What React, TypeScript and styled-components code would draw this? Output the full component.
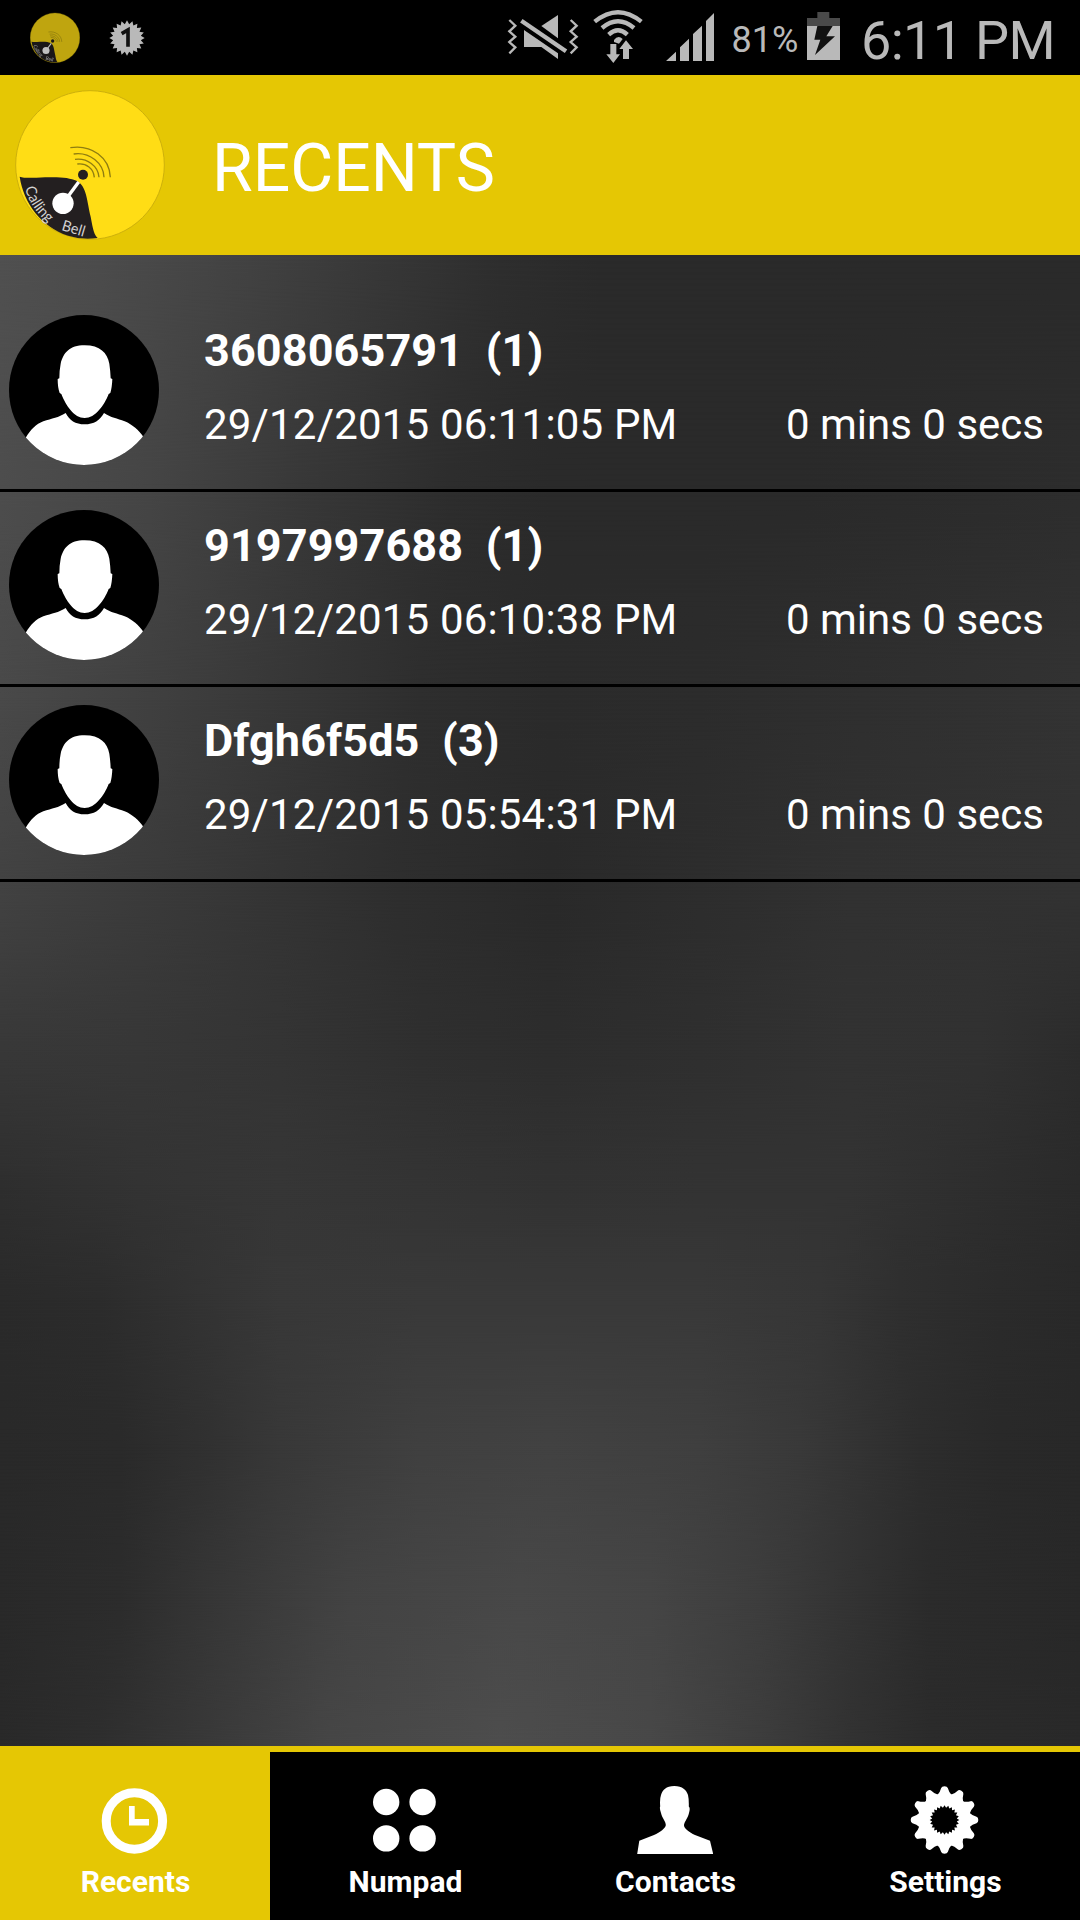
import React from "react";
import styled, { createGlobalStyle } from "styled-components";

const YELLOW = "#e5c704";
const GREY = "#b9b9b9";

const GlobalStyle = createGlobalStyle`
  * { box-sizing: border-box; }
  body { margin: 0; background: #000; }
  svg { display: block; flex: none; }
`;

const Screen = styled.div`
  width: 1080px;
  height: 1920px;
  display: flex;
  flex-direction: column;
  overflow: hidden;
  font-family: Roboto, "Noto Sans", sans-serif;
  color: #fff;
`;

const StatusBar = styled.div`
  height: 75px;
  flex: none;
  display: flex;
  justify-content: space-between;
  background: #000;
  color: ${GREY};
`;

const Notifications = styled.div`
  display: flex;
  padding-left: 29px;
  gap: 28px;
`;

const Indicators = styled.div`
  display: flex;
  align-items: flex-start;
  padding-right: 19px;
`;

const Glyph = styled.svg<{ $w: number; $gap?: number }>`
  width: ${(p) => p.$w}px;
  height: 75px;
  margin-right: ${(p) => p.$gap ?? 0}px;
`;

const BatteryLevel = styled.span`
  width: 74.5px;
  padding-top: 19px;
  font-size: 36px;
  line-height: 42px;
`;

const Clock = styled.span`
  width: 200px;
  padding-top: 9px;
  font-size: 54px;
  line-height: 64px;
  letter-spacing: -0.7px;
  white-space: nowrap;
`;

const Header = styled.header`
  height: 180px;
  flex: none;
  display: flex;
  align-items: center;
  padding-left: 14px;
  gap: 46px;
  background: ${YELLOW};
`;

const Title = styled.h1`
  margin: 0;
  padding-top: 7px;
  font-size: 66px;
  line-height: 78px;
  font-weight: 400;
`;

const Body = styled.main`
  flex: 1;
  display: grid;
  grid-template: 100% / 100%;
`;

const Band = styled.div<{ $stops: string; $from: number; $to: number }>`
  grid-area: 1 / 1;
  background: linear-gradient(90deg, ${(p) => p.$stops});
  ${(p) =>
    p.$to > 0 &&
    `mask-image: linear-gradient(180deg, transparent ${p.$from}px, #000 ${p.$to}px);`}
`;

const CallList = styled.div`
  grid-area: 1 / 1;
  z-index: 1;
  padding-top: 42px;
`;

const Row = styled.article`
  height: 195px;
  display: flex;
  padding: 18px 36px 0 9px;
  gap: 45px;
  border-bottom: 3px solid #000;
`;

const CallInfo = styled.div`
  flex: 1;
  padding-top: 9px;
  display: flex;
  flex-direction: column;
  gap: 23px;
`;

const Caller = styled.div`
  font-size: 45px;
  line-height: 53px;
  font-weight: 700;
  letter-spacing: 0.1px;
  white-space: pre;
`;

const CallMeta = styled.div`
  display: flex;
  justify-content: space-between;
  font-size: 42px;
  line-height: 50px;
`;

const CallDate = styled.span`
  letter-spacing: 0.18px;
`;

const TabBar = styled.nav`
  height: 174px;
  flex: none;
  display: grid;
  grid-template-columns: repeat(4, 1fr);
  border-top: 6px solid ${YELLOW};
  background: #000;
`;

const Tab = styled.div<{ $active?: boolean }>`
  display: flex;
  flex-direction: column;
  align-items: center;
  gap: 10px;
  padding-top: 34px;
  background: ${(p) => (p.$active ? YELLOW : "#000")};
`;

const TabLabel = styled.span`
  margin-left: 1px;
  font-size: 30px;
  line-height: 36px;
  font-weight: 700;
`;

const TabIcon = styled.svg`
  width: 76px;
  height: 68px;
`;

/* Wallpaper shades: one entry per height, each a list of [x, grey level]. */
const shades: { y: number; points: [number, number][] }[] = [
  { y: 0, points: [[0, 80], [100, 76], [250, 66], [400, 54], [500, 46], [600, 42], [1080, 42]] },
  { y: 235, points: [[0, 77], [150, 69], [300, 56], [450, 45], [550, 42], [800, 42], [1080, 45]] },
  { y: 445, points: [[0, 73], [150, 64], [300, 54], [420, 46], [550, 43], [700, 44], [1080, 51]] },
  { y: 635, points: [[0, 66], [140, 59], [300, 51], [400, 46], [550, 41], [700, 45], [850, 49], [1080, 50]] },
  { y: 795, points: [[0, 56], [140, 55], [280, 52], [420, 47], [550, 45], [700, 47], [850, 50], [980, 49], [1080, 44]] },
  { y: 935, points: [[0, 46], [140, 51], [280, 54], [420, 52], [550, 50], [700, 51], [850, 51], [1000, 45], [1080, 42]] },
  { y: 1045, points: [[0, 42], [100, 44], [200, 51], [280, 56], [420, 57], [700, 57], [820, 54], [900, 47], [1000, 43], [1080, 41]] },
  { y: 1195, points: [[0, 41], [120, 42], [210, 49], [280, 56], [420, 64], [550, 66], [700, 63], [800, 57], [920, 45], [1000, 41], [1080, 40]] },
  { y: 1345, points: [[0, 41], [120, 44], [210, 54], [350, 67], [520, 72], [650, 69], [760, 61], [850, 51], [930, 43], [1080, 40]] },
  { y: 1491, points: [[0, 41], [100, 46], [200, 56], [330, 70], [500, 77], [650, 72], [760, 61], [850, 50], [930, 43], [1080, 41]] },
];

const star = (n: number, cx: number, cy: number, R: number, r: number) =>
  Array.from({ length: n * 2 }, (_, i) => {
    const a = (i * Math.PI) / n - Math.PI / 2;
    const d = i % 2 ? r : R;
    return `${(cx + d * Math.cos(a)).toFixed(2)},${(cy + d * Math.sin(a)).toFixed(2)}`;
  }).join(" ");

const LogoArt = ({ id }: { id: string }) => (
  <>
    <circle cx="271" cy="285" r="223" fill="#ffdd15" stroke="#cdb00c" strokeWidth="3" />
    <path d="M60 320 Q75 325 110 323 C180 320 205 322 232 333 C262 350 262 395 273 440 C280 480 284 495 294 504 Q245 510 205 497 C125 470 72 400 60 320Z" fill="#231f20" />
    <g fill="none" stroke="#8f7d10" strokeWidth="4">
      <path d="M212 233 C275 223 330 262 332 322" />
      <path d="M222 252 C270 245 312 280 313 322" />
      <path d="M226 268 C262 263 296 288 298 322" />
      <path d="M233 282 C260 278 282 296 284 322" />
    </g>
    <circle cx="250" cy="314" r="15" fill="#231f20" />
    <path d="M237 336 L200 386" stroke="#fff" strokeWidth="10" />
    <circle cx="190" cy="400" r="32" fill="#fff" />
    <path id={`${id}-a`} d="M76 354 Q92 415 148 462" fill="none" />
    <path id={`${id}-b`} d="M184 480 L258 502" fill="none" />
    <g fill="#d2d2d2" fontFamily="Lato, sans-serif" fontSize="45">
      <text><textPath href={`#${id}-a`} textLength="128" lengthAdjust="spacingAndGlyphs">Calling</textPath></text>
      <text><textPath href={`#${id}-b`} textLength="70" lengthAdjust="spacingAndGlyphs">Bell</textPath></text>
    </g>
  </>
);

const Avatar = () => (
  <svg width="150" height="150" viewBox="27 44 450 450">
    <clipPath id="face"><circle cx="252" cy="269" r="225" /></clipPath>
    <circle cx="252" cy="269" r="225" fill="#000" />
    <g fill="#fff" clipPath="url(#face)">
      <path d="M254 135 C300 135 322 158 328 190 Q331 210 332 234 L337 236 Q336 262 331 278 L326 281 C312 316 286 353 254 353 C222 353 198 316 184 281 L179 278 Q173 262 173 236 L178 234 Q178 210 182 190 C190 158 208 135 254 135Z" />
      <path d="M78 411 C92 388 108 371 130 363 C156 354 176 352 197 338 C208 360 226 372 254 372 C282 372 300 360 312 338 C332 352 352 354 374 363 C398 373 416 390 430 409 L430 500 H78Z" />
    </g>
  </svg>
);

const calls = [
  { who: "3608065791", count: 1, when: "29/12/2015 06:11:05 PM" },
  { who: "9197997688", count: 1, when: "29/12/2015 06:10:38 PM" },
  { who: "Dfgh6f5d5", count: 3, when: "29/12/2015 05:54:31 PM" },
];

const gearTeeth = Array.from({ length: 12 }, (_, i) => i * 30);

export default function App() {
  return (
    <Screen>
      <GlobalStyle />
      <StatusBar>
        <Notifications>
          <Glyph $w={52} viewBox="37 -55 468 675">
            <g opacity=".75"><LogoArt id="mini" /></g>
          </Glyph>
          <Glyph $w={36} viewBox="327 0 108 225">
            <polygon points={star(20, 381, 114, 53, 42)} fill={GREY} />
            <path d="M365 101 L384 90 V140" fill="none" stroke="#111" strokeWidth="11" />
          </Glyph>
        </Notifications>
        <Indicators>
          <Glyph $w={78} $gap={8} viewBox="42 0 234 225" fill={GREY}>
            <g fill="none" stroke={GREY} strokeWidth="7">
              <path d="M58 60 L76 78 L58 95 L76 116 L58 126 L76 141 L58 160" stroke="none" />
              <path d="M58 60 L76 77 L58 94 L76 110 L58 126 L76 142 L58 160" />
              <path d="M242 60 L260 77 L242 94 L260 110 L242 126 L260 142 L242 160" />
            </g>
            <path d="M94 62 L228 154" stroke={GREY} strokeWidth="13" />
            <path d="M204 45 V115 L154 78Z" />
            <path d="M102 90 L204 160 V177 L154 141 H102Z" />
          </Glyph>
          <Glyph $w={55} $gap={19} viewBox="300 0 165 225">
            <g fill="none" stroke={GREY} strokeWidth="13">
              <path d="M314 65 Q384 8 454 65" />
              <path d="M336 84 Q384 44 432 84" />
              <path d="M356 104 Q384 78 412 104" />
            </g>
            <path d="M372 120 Q384 104 398 117 L387 131 L372 126Z" fill={GREY} />
            <path d="M361 132 H379 V163 H390 L370 189 L349 163 H361Z M399 177 H417 V147 H429 L408 121 L388 147 H399Z" fill={GREY} />
          </Glyph>
          <Glyph $w={52} $gap={16} viewBox="522 0 156 225" fill={GREY}>
            <path d="M528 183 L558 155 V183Z M570 183 V142 L597 116 V183Z M609 183 V102 L636 77 V183Z M648 183 V63 L672 39 V183Z" />
          </Glyph>
          <BatteryLevel>81%</BatteryLevel>
          <Glyph $w={35} $gap={20} viewBox="948 0 105 225">
            <path d="M951 54 H982 V36 H1018 V54 H1050 V78 H951Z" fill="#4a4a4a" />
            <path d="M951 78 H1050 V180 H951Z" fill={GREY} />
            <path d="M982 78 H1028 L1009 109 H1035 L975 165 L991 119 H973Z" fill="#111" />
          </Glyph>
          <Clock>6:11 PM</Clock>
        </Indicators>
      </StatusBar>
      <Header>
        <svg width="152" height="150" viewBox="43 60 456 450"><LogoArt id="logo" /></svg>
        <Title>RECENTS</Title>
      </Header>
      <Body>
        {shades.map((s, i) => (
          <Band
            key={s.y}
            $from={i ? shades[i - 1].y : 0}
            $to={s.y}
            $stops={s.points.map(([x, v]) => `rgb(${v},${v},${v}) ${x}px`).join(", ")}
          />
        ))}
        <CallList>
          {calls.map((c) => (
            <Row key={c.who}>
              <Avatar />
              <CallInfo>
                <Caller>{`${c.who}  (${c.count})`}</Caller>
                <CallMeta>
                  <CallDate>{c.when}</CallDate>
                  <span>0 mins 0 secs</span>
                </CallMeta>
              </CallInfo>
            </Row>
          ))}
        </CallList>
      </Body>
      <TabBar>
        <Tab $active>
          <TabIcon viewBox="97 1786 76 68">
            <circle cx="134.4" cy="1821" r="28.2" fill="none" stroke="#fff" strokeWidth="9" />
            <path d="M129 1806 H134.7 V1819 H149 V1825.6 H129Z" fill="#fff" />
          </TabIcon>
          <TabLabel>Recents</TabLabel>
        </Tab>
        <Tab>
          <TabIcon viewBox="367 1786 76 68" fill="#fff">
            <circle cx="386.2" cy="1802" r="13.2" />
            <circle cx="422.6" cy="1802" r="13.2" />
            <circle cx="386.2" cy="1838.4" r="13.2" />
            <circle cx="422.6" cy="1838.4" r="13.2" />
          </TabIcon>
          <TabLabel>Numpad</TabLabel>
        </Tab>
        <Tab>
          <TabIcon viewBox="637 1786 76 68" fill="#fff">
            <path d="M674.3 1786 C682.5 1786 686.5 1790 688 1795 Q689 1799 688.8 1806.5 Q690.5 1808 689 1813 C688 1818 684.5 1821.5 684 1825 C683.6 1828 689 1832.5 695 1835 L710 1840.7 L713.2 1854 H637.2 L639.3 1840.7 L654 1835 C660 1832.5 665.7 1828 665.8 1825 C665.8 1821.5 662 1818 661 1813 Q659.3 1808 660.2 1806.5 Q659.6 1799 661 1795 C662.5 1790 666 1786 674.3 1786Z" />
          </TabIcon>
          <TabLabel>Contacts</TabLabel>
        </Tab>
        <Tab>
          <TabIcon viewBox="907 1786 76 68">
            <g fill="#fff">
              <circle cx="944.5" cy="1820" r="26.4" />
              {gearTeeth.map((a) => (
                <path key={a} transform={`rotate(${a} 944.5 1820)`} d="M937 1795.5 Q940.3 1792 941.2 1788 Q941.8 1786.2 944.5 1786.2 Q947.2 1786.2 947.8 1788 Q948.7 1792 952 1795.5Z" />
              ))}
            </g>
            <polygon points={star(24, 944.5, 1820, 14.8, 12.4)} fill="#000" />
          </TabIcon>
          <TabLabel>Settings</TabLabel>
        </Tab>
      </TabBar>
    </Screen>
  );
}
